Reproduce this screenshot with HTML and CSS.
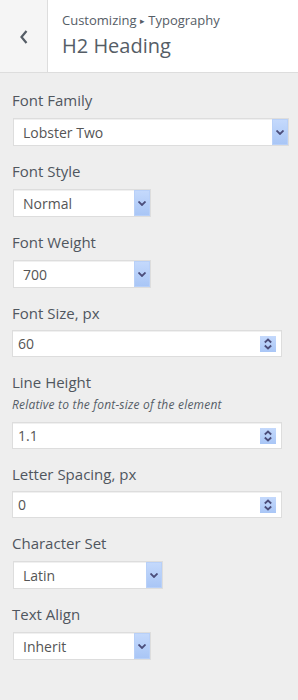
FILE: index.html
```html
<!DOCTYPE html>
<html lang="en">
<head>
    <meta charset="UTF-8">
    <meta name="viewport" content="width=device-width, initial-scale=1.0">
    <title>H2 Heading</title>
    <link rel="stylesheet" href="styles.css">
</head>
<body>

    <!-- Header -->
    <div class="header">
        <div class="back">
            <svg width="10" height="16" viewBox="0 0 10 16"><path d="M7.5 2 L2.5 8 L7.5 14" fill="none" stroke="#555d66" stroke-width="2.2"/></svg>
        </div>
        <div class="title">
            <div class="crumbs">Customizing <span class="tri">&#9656;</span> Typography</div>
            <div class="heading">H2 Heading</div>
        </div>
    </div>

    <!-- Controls -->
    <div class="controls">
        <div class="control">
            <div class="label">Font Family</div>
            <div class="select w-full">Lobster Two<span class="arrow"><svg width="8" height="5" viewBox="0 0 8 5"><path d="M0.5 0.5 L4 4 L7.5 0.5" fill="none" stroke="#4b4d7a" stroke-width="1.8"/></svg></span></div>
        </div>
        <div class="control">
            <div class="label">Font Style</div>
            <div class="select w-small">Normal<span class="arrow"><svg width="8" height="5" viewBox="0 0 8 5"><path d="M0.5 0.5 L4 4 L7.5 0.5" fill="none" stroke="#4b4d7a" stroke-width="1.8"/></svg></span></div>
        </div>
        <div class="control">
            <div class="label">Font Weight</div>
            <div class="select w-small">700<span class="arrow"><svg width="8" height="5" viewBox="0 0 8 5"><path d="M0.5 0.5 L4 4 L7.5 0.5" fill="none" stroke="#4b4d7a" stroke-width="1.8"/></svg></span></div>
        </div>
        <div class="control">
            <div class="label num">Font Size, px</div>
            <div class="number">60<span class="spin"><svg width="8" height="12" viewBox="0 0 8 12"><path d="M0.8 4.5 L4 1.5 L7.2 4.5" fill="none" stroke="#4b4d7a" stroke-width="1.8"/><path d="M0.8 7.5 L4 10.5 L7.2 7.5" fill="none" stroke="#4b4d7a" stroke-width="1.8"/></svg></span></div>
        </div>
        <div class="control">
            <div class="label tight">Line Height</div>
            <div class="desc">Relative to the font-size of the element</div>
            <div class="number">1.1<span class="spin"><svg width="8" height="12" viewBox="0 0 8 12"><path d="M0.8 4.5 L4 1.5 L7.2 4.5" fill="none" stroke="#4b4d7a" stroke-width="1.8"/><path d="M0.8 7.5 L4 10.5 L7.2 7.5" fill="none" stroke="#4b4d7a" stroke-width="1.8"/></svg></span></div>
        </div>
        <div class="control">
            <div class="label num">Letter Spacing, px</div>
            <div class="number">0<span class="spin"><svg width="8" height="12" viewBox="0 0 8 12"><path d="M0.8 4.5 L4 1.5 L7.2 4.5" fill="none" stroke="#4b4d7a" stroke-width="1.8"/><path d="M0.8 7.5 L4 10.5 L7.2 7.5" fill="none" stroke="#4b4d7a" stroke-width="1.8"/></svg></span></div>
        </div>
        <div class="control">
            <div class="label">Character Set</div>
            <div class="select w-mid">Latin<span class="arrow"><svg width="8" height="5" viewBox="0 0 8 5"><path d="M0.5 0.5 L4 4 L7.5 0.5" fill="none" stroke="#4b4d7a" stroke-width="1.8"/></svg></span></div>
        </div>
        <div class="control">
            <div class="label">Text Align</div>
            <div class="select w-small">Inherit<span class="arrow"><svg width="8" height="5" viewBox="0 0 8 5"><path d="M0.5 0.5 L4 4 L7.5 0.5" fill="none" stroke="#4b4d7a" stroke-width="1.8"/></svg></span></div>
        </div>
    </div>

</body>
</html>
```

FILE: styles.css
```css
/* Base */
* { margin: 0; padding: 0; box-sizing: border-box; }
body { background: #eeeeee; color: #555d66; font-family: "Open Sans", "Liberation Sans", sans-serif; }

/* Header */
.header { display: flex; height: 73px; background: #fff; border-bottom: 1px solid #dddddd; }
.back { width: 48px; background: #f5f5f5; border-right: 1px solid #dddddd; display: flex; align-items: center; justify-content: center; padding-top: 1px; }
.title { padding: 11px 0 0 14px; }
.crumbs { font-size: 13px; line-height: 18px; }
.tri { font-size: 9px; vertical-align: 1px; }
.heading { font-size: 20px; line-height: 26px; margin-top: 3px; font-weight: 400; }

/* Controls */
.controls { padding: 17px 12px 0 12px; }
.control { margin-bottom: 15px; }
.label { font-size: 15px; font-weight: 400; line-height: 20px; margin-bottom: 8px; color: #50565e; }
.label.num { margin-bottom: 7px; }
.label.tight { margin-bottom: 4px; }
.desc { font-size: 12px; font-style: italic; line-height: 18px; margin-bottom: 8px; letter-spacing: 0.2px; }

.select { position: relative; display: flex; align-items: center; height: 28px; margin-left: 1px; padding-left: 9px; background: #fff; border: 1px solid #dddddd; box-shadow: inset 0 1px 0 #f0f0f0; font-size: 14px; color: #555555; }
.w-full { width: 276px; }
.w-small { width: 138px; }
.w-mid { width: 150px; }
.arrow { position: absolute; right: 0; top: 0; bottom: 0; width: 16px; display: flex; align-items: center; justify-content: center; background: linear-gradient(#c4d9fc, #a9c6f6); border: 1px solid #b8d0f8; }

.number { position: relative; display: flex; align-items: center; width: 270px; height: 27px; padding-left: 5px; background: #fff; border: 1px solid #dddddd; box-shadow: inset 0 1px 0 #f0f0f0; font-size: 14px; color: #555555; }
.spin { position: absolute; right: 5px; top: 5px; width: 16px; height: 16px; display: flex; align-items: center; justify-content: center; background: linear-gradient(#c4d9fc, #a9c6f6); }
```
